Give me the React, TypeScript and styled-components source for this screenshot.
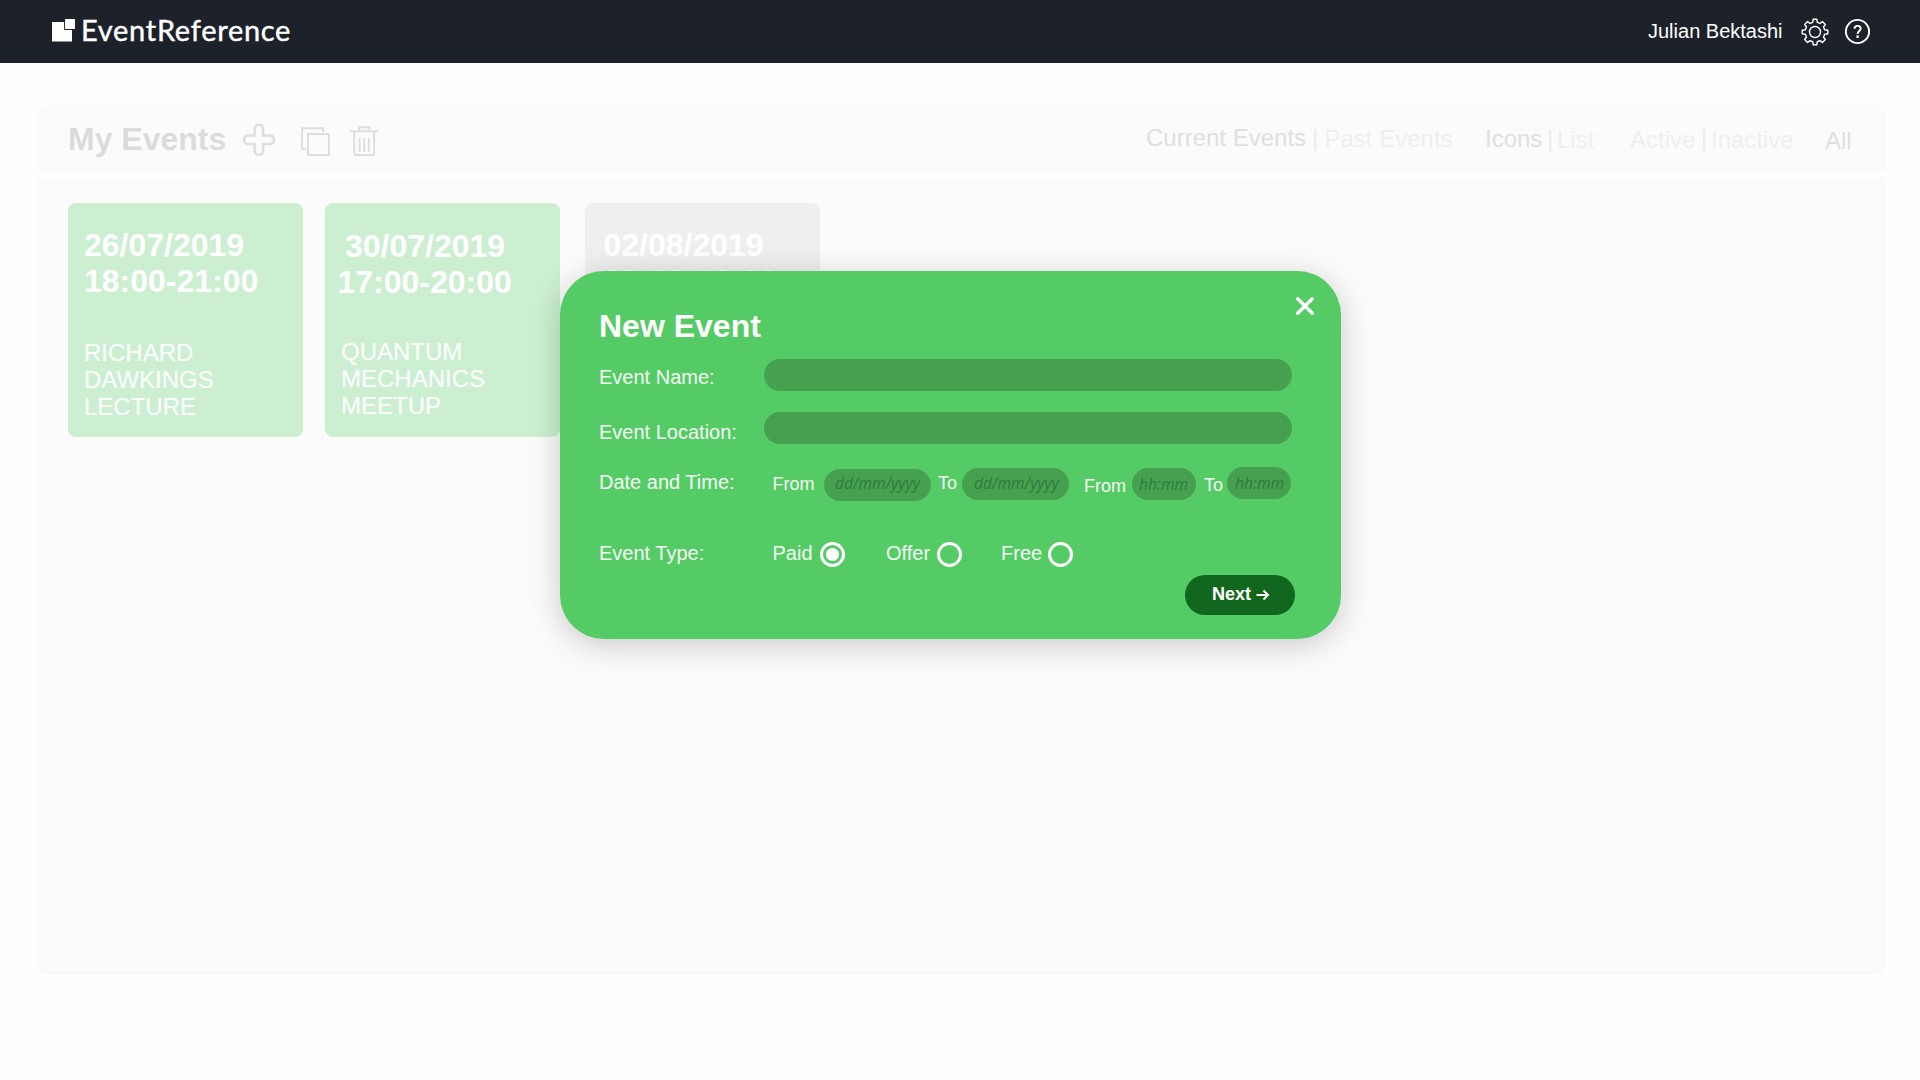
import React from 'react';
import styled, { createGlobalStyle } from 'styled-components';

const Global = createGlobalStyle`
  * { box-sizing: border-box; }
  body {
    margin: 0;
    background: #fefefe;
    font-family: "Liberation Sans", Arial, sans-serif;
    overflow: hidden;
  }
`;

const Page = styled.div`
  width: 1920px;
  height: 1080px;
  display: flex;
  flex-direction: column;
`;

const Header = styled.header`
  height: 63px;
  background: #1d2129;
  color: #fff;
  display: flex;
  justify-content: space-between;
  padding: 0 48px 0 51px;
`;

const Brand = styled.div`
  display: flex;
  align-items: flex-start;
  padding-top: 18px;
`;

const BrandName = styled.span`
  margin: -6px 0 0 5px;
  font: 400 29px/36px Lato, "Gill Sans", sans-serif;
  letter-spacing: 0.72px;
  -webkit-text-stroke: 0.4px #fff;
  white-space: nowrap;
`;

const Account = styled.div`
  display: flex;
  align-items: flex-start;
  padding-top: 18px;
`;

const UserName = styled.span`
  width: 153px;
  margin-top: 1px;
  font-size: 20px;
  line-height: 24px;
  white-space: nowrap;
`;

const Settings = styled.span`
  display: flex;
  width: 43px;
`;

const Icon = styled.svg`
  display: block;
  flex: none;
`;

const Tool = styled(Icon)<{ $left?: number }>`
  margin-left: ${p => p.$left ?? 0}px;
  fill: none;
  stroke: #dedede;
  stroke-width: 2;
`;

const Panel = styled.main`
  width: 1850px;
  margin: 42px 0 0 36px;
  display: flex;
  flex-direction: column;
  gap: 5px;
`;

const Toolbar = styled.div`
  height: 68px;
  padding: 0 34px 0 32px;
  border-radius: 12px 12px 0 0;
  background: #fbfbfb;
  display: flex;
  justify-content: space-between;
`;

const Actions = styled.div`
  display: flex;
  align-items: flex-start;
  padding-top: 16px;
`;

const PageTitle = styled.h1`
  width: 173px;
  margin: 0;
  font-size: 32px;
  line-height: 36px;
  color: #dbdbdb;
  white-space: nowrap;
`;

const Filters = styled.nav`
  display: flex;
  align-items: flex-start;
`;

const Filter = styled.span<{ $w: number; $top: number; $on?: boolean }>`
  width: ${p => p.$w}px;
  margin-top: ${p => p.$top}px;
  font-size: 24px;
  line-height: 28px;
  color: ${p => (p.$on ? '#dfdfdf' : '#efefef')};
  white-space: nowrap;
`;

const Divider = styled(Filter)`
  color: #ebebeb;
`;

const Board = styled.section`
  height: 796px;
  padding: 25px 32px;
  border-radius: 0 0 12px 12px;
  background: #fbfbfb;
  border-bottom: 2px solid #f8f8f8;
  display: flex;
  align-items: flex-start;
`;

const Card = styled.article<{ $gap: number; $muted?: boolean }>`
  flex: none;
  width: 235px;
  height: 234px;
  margin-right: ${p => p.$gap}px;
  padding: 24px 0 0 16px;
  border-radius: 8px;
  background: ${p => (p.$muted ? '#efefef' : '#ccefd1')};
  color: #fff;
`;

const When = styled.div<{ $left?: number; $top?: number }>`
  margin-left: ${p => p.$left ?? 0}px;
  padding-top: ${p => p.$top ?? 0}px;
  font-size: 32px;
  font-weight: 700;
  line-height: 36px;
  white-space: nowrap;
`;

const Name = styled.div<{ $left?: number; $top: number }>`
  margin: ${p => p.$top}px 0 0 ${p => p.$left ?? 0}px;
  font-size: 24px;
  line-height: 27px;
  white-space: pre-line;
`;

const Modal = styled.div`
  position: absolute;
  left: 560px;
  top: 271px;
  width: 781px;
  height: 368px;
  padding: 0 46px 0 39px;
  border-radius: 44px;
  background: #54cb65;
  box-shadow: 0 6px 32px rgba(0, 0, 0, 0.2);
  color: #fff;
  display: flex;
  flex-direction: column;
`;

const ModalHead = styled.div`
  height: 88px;
  display: flex;
  justify-content: space-between;
  align-items: flex-start;
`;

const ModalTitle = styled.h2`
  margin: 37px 0 0;
  font-size: 32px;
  line-height: 36px;
`;

const Close = styled.button`
  margin: 25px -20px 0 0;
  padding: 0;
  border: 0;
  background: none;
  color: #fff;
`;

const Row = styled.div<{ $h: number }>`
  height: ${p => p.$h}px;
  display: flex;
  align-items: flex-start;
`;

const Label = styled.label<{ $w: number; $top: number }>`
  flex: none;
  width: ${p => p.$w}px;
  margin-top: ${p => p.$top}px;
  font-size: 20px;
  line-height: 24px;
  white-space: nowrap;
  color: #f4fdf5;
`;

const Small = styled(Label)`
  font-size: 18px;
  line-height: 20px;
`;

const Field = styled.div<{ $w: number; $top?: number; $gap?: number; $pad?: number; $line?: number }>`
  flex: none;
  width: ${p => p.$w}px;
  height: 32px;
  margin: ${p => p.$top ?? 0}px ${p => p.$gap ?? 0}px 0 0;
  padding-left: ${p => p.$pad ?? 0}px;
  border-radius: 16px;
  background: #45a150;
  color: #2f7a3b;
  font: italic 400 15.6px/30px "Open Sans", "Noto Sans", sans-serif;
  line-height: ${p => p.$line ?? 30}px;
  white-space: nowrap;
`;

const Radio = styled.span<{ $gap: number; $on?: boolean }>`
  flex: none;
  width: 25px;
  height: 25px;
  margin: 1px ${p => p.$gap}px 0 0;
  border: 3px solid #fff;
  border-radius: 50%;
  background: ${p => (p.$on ? 'radial-gradient(circle, #fff 6px, transparent 7px)' : 'none')};
`;

const Next = styled.button`
  align-self: flex-end;
  width: 110px;
  height: 40px;
  margin: 0;
  padding: 9px 0 0 27px;
  border: 0;
  border-radius: 20px;
  background: #11671e;
  color: #fff;
  display: flex;
  align-items: flex-start;
  gap: 5px;
  font: 700 18px/20px "Liberation Sans", Arial, sans-serif;
`;

export default function App() {
  return (
    <>
      <Global />
      <Page>
        <Header>
          <Brand>
            <Icon width="25" height="25" viewBox="0 0 25 25">
              <path d="M1 4H21V23.5H1Z" fill="#fff" />
              <path d="M13.6 0.5H24.4V11.5H13.6Z" fill="#fff" stroke="#1d2129" />
            </Icon>
            <BrandName>EventReference</BrandName>
          </Brand>
          <Account>
            <UserName>Julian Bektashi</UserName>
            <Settings>
              <Icon width="28" height="28" viewBox="0 0 28 28" fill="none" stroke="#fff" strokeWidth="1.4" strokeLinejoin="round">
                <path d="M12.2 1.2H15.8L16.3 4.4Q17.8 4.8 19 5.5L21.4 3.6L24.3 6.5L22.5 9Q23.2 10.3 23.5 11.7L26.8 12.2V15.8L23.5 16.4Q23.2 17.7 22.5 19L24.3 21.5L21.4 24.4L19 22.6Q17.8 23.3 16.3 23.6L15.8 26.8H12.2L11.7 23.6Q10.2 23.3 9 22.6L6.6 24.4L3.7 21.5L5.5 19Q4.8 17.7 4.5 16.4L1.2 15.8V12.2L4.5 11.7Q4.8 10.3 5.5 9L3.7 6.5L6.6 3.6L9 5.5Q10.2 4.8 11.7 4.4Z" />
                <circle cx="14" cy="14" r="5.5" />
              </Icon>
            </Settings>
            <Icon width="28" height="28" viewBox="0 0 28 28" fill="none" stroke="#fff" strokeWidth="1.9">
              <circle cx="13.5" cy="13.5" r="11.6" />
              <path d="M10.5 10.8C10.5 8.8 11.7 7.9 13.6 7.9C15.5 7.9 16.7 9 16.7 10.6C16.7 13 13.6 12.9 13.6 15.9" />
              <path d="M13.6 17.4V19.9" strokeWidth="2.4" />
            </Icon>
          </Account>
        </Header>
        <Panel>
          <Toolbar>
            <Actions>
              <PageTitle>My Events</PageTitle>
              <Tool width="36" height="36" viewBox="0 0 36 36">
                <path strokeWidth="2.4" transform="translate(-.4 -.2)" d="M14 8.4Q14 4.1 18.2 4.1Q22.5 4.1 22.5 8.4V14.7H29Q33.3 14.7 33.3 18.9Q33.3 23.2 29 23.2H22.5V29.7Q22.5 34 18.2 34Q14 34 14 29.7V23.2H7.7Q3.4 23.2 3.4 18.9Q3.4 14.7 7.7 14.7H14Z" />
              </Tool>
              <Tool $left={22} width="33" height="36" viewBox="0 0 33 36">
                <path d="M24 11V7.3H3V28H7" />
                <rect x="9" y="13" width="21" height="21" />
              </Tool>
              <Tool $left={16} width="32" height="36" viewBox="0 0 32 36">
                <path d="M2 10.3H30M11 10V6.3H21.5V10M6.2 10.3V31.5Q6.2 34 8.7 34H23.6Q26.1 34 26.1 31.5V10.3" />
                <path d="M11.7 17V31M16.2 17V31M20.8 17V31" strokeWidth="1.8" />
              </Tool>
            </Actions>
            <Filters>
              <Filter $w={166} $top={19} $on>Current Events</Filter>
              <Divider $w={12.5} $top={19}>|</Divider>
              <Filter $w={160.5} $top={20}>Past Events</Filter>
              <Filter $w={62} $top={20} $on>Icons</Filter>
              <Divider $w={10} $top={20}>|</Divider>
              <Filter $w={73} $top={21}>List</Filter>
              <Filter $w={71} $top={21}>Active</Filter>
              <Divider $w={10} $top={19}>|</Divider>
              <Filter $w={114} $top={21}>Inactive</Filter>
              <Filter $w={27} $top={22} $on>All</Filter>
            </Filters>
          </Toolbar>
          <Board>
            <Card $gap={22}>
              <When>26/07/2019</When>
              <When>18:00-21:00</When>
              <Name $top={40}>{'RICHARD\nDAWKINGS\nLECTURE'}</Name>
            </Card>
            <Card $gap={25}>
              <When $left={4} $top={1}>30/07/2019</When>
              <When $left={-3.5}>17:00-20:00</When>
              <Name $top={38}>{'QUANTUM\nMECHANICS\nMEETUP'}</Name>
            </Card>
            <Card $gap={0} $muted>
              <When $left={2.5}>02/08/2019</When>
              <When $left={2}>08:00-21:00</When>
            </Card>
          </Board>
        </Panel>
      </Page>
      <Modal>
        <ModalHead>
          <ModalTitle>New Event</ModalTitle>
          <Close aria-label="Close">
            <Icon width="20" height="20" viewBox="0 0 20 20" fill="none" stroke="#fff" strokeWidth="3.4" strokeLinecap="round">
              <path d="M2.7 2.7L17.3 17.3M17.3 2.7L2.7 17.3" />
            </Icon>
          </Close>
        </ModalHead>
        <Row $h={53}>
          <Label $w={165} $top={6}>Event Name:</Label>
          <Field $w={528} />
        </Row>
        <Row $h={55}>
          <Label $w={165} $top={8}>Event Location:</Label>
          <Field $w={528} />
        </Row>
        <Row $h={74}>
          <Label $w={173.5} $top={3}>Date and Time:</Label>
          <Small $w={51.5} $top={7}>From</Small>
          <Field $w={107} $top={2} $gap={7} $pad={11} $line={29}>dd/mm/yyyy</Field>
          <Small $w={24} $top={6}>To</Small>
          <Field $w={107} $top={1} $gap={15} $pad={12}>dd/mm/yyyy</Field>
          <Small $w={48} $top={9}>From</Small>
          <Field $w={64} $top={1} $gap={8} $pad={7} $line={32}>hh:mm</Field>
          <Small $w={23} $top={8}>To</Small>
          <Field $w={64} $pad={8} $line={32}>hh:mm</Field>
        </Row>
        <Row $h={34}>
          <Label $w={173.5} $top={0}>Event Type:</Label>
          <Label $w={47.5} $top={0}>Paid</Label>
          <Radio $gap={41} $on />
          <Label $w={51} $top={0}>Offer</Label>
          <Radio $gap={39} />
          <Label $w={47} $top={0}>Free</Label>
          <Radio $gap={0} />
        </Row>
        <Next>
          Next
          <Icon width="14" height="20" viewBox="0 0 14 20" fill="none" stroke="#fff" strokeWidth="2">
            <path d="M0.5 11H12M7.5 6.5L12 11L7.5 15.5" />
          </Icon>
        </Next>
      </Modal>
    </>
  );
}
